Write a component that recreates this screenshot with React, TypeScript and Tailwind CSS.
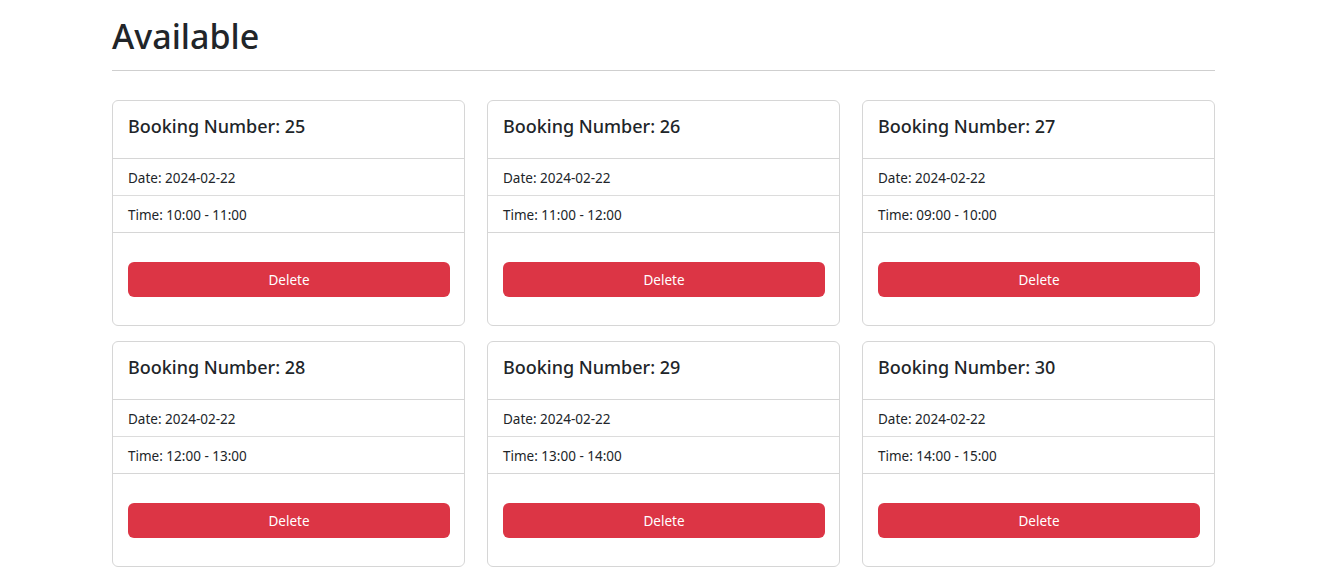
import React from "react";

const bookings = [
  { id: 25, date: "2024-02-22", time: "10:00 - 11:00" },
  { id: 26, date: "2024-02-22", time: "11:00 - 12:00" },
  { id: 27, date: "2024-02-22", time: "09:00 - 10:00" },
  { id: 28, date: "2024-02-22", time: "12:00 - 13:00" },
  { id: 29, date: "2024-02-22", time: "13:00 - 14:00" },
  { id: 30, date: "2024-02-22", time: "14:00 - 15:00" },
];

function BookingCard({ id, date, time }: { id: number; date: string; time: string }) {
  return (
    <div className="rounded-[6px] border border-[#d6d6d6] bg-white">
      <div className="px-[15px] pt-[13px] pb-[20px] border-b border-[#d6d6d6]">
        <h5 className="text-[18px] leading-6 font-medium">Booking Number: {id}</h5>
      </div>
      <div className="px-[15px] pt-[9px] pb-[7px] text-[13.5px] leading-5 border-b border-[#dcdcdc]">
        Date: {date}
      </div>
      <div className="px-[15px] pt-[9px] pb-[7px] text-[13.5px] leading-5 border-b border-[#d6d6d6]">
        Time: {time}
      </div>
      <div className="pl-[15px] pr-[14px] pt-[29px] pb-[28px]">
        <button className="w-full h-[35px] pt-px rounded-[6px] bg-[#dc3545] text-white text-[13.5px]">
          Delete
        </button>
      </div>
    </div>
  );
}

export default function App() {
  return (
    <main
      className="min-h-screen bg-white text-[#212529]"
      style={{ fontFamily: '"Noto Sans", "Open Sans", sans-serif' }}
    >
      <div className="ml-[112px] w-[1103px] pt-[12px]">
        <h1 className="text-[34px] leading-[48px] font-medium pb-[10px] border-b border-[#cfcfcf]">
          Available
        </h1>
        <div className="grid grid-cols-3 gap-x-[22px] gap-y-[15px] mt-[29px]">
          {bookings.map((b) => (
            <BookingCard key={b.id} {...b} />
          ))}
        </div>
      </div>
    </main>
  );
}
